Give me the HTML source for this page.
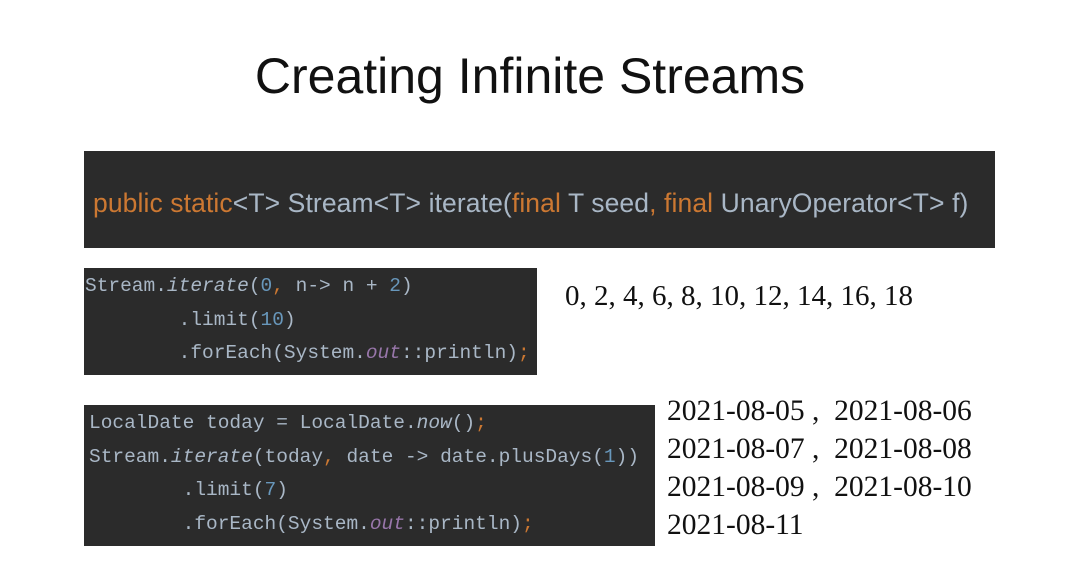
<!DOCTYPE html>
<html><head><meta charset="utf-8"><style>
body{margin:0;width:1070px;height:584px;background:#fff;position:relative;overflow:hidden;font-family:"Liberation Sans",sans-serif}
.a{position:absolute;white-space:pre}
.title{left:200px;top:47px;font-size:50px;color:#111;width:660px;text-align:center}
.box{position:absolute;background:#2b2b2b}
.code{font-family:"Liberation Mono",monospace;font-size:19.5px;color:#a9b7c6;line-height:33.5px}
.o{color:#cc7832}.n{color:#6897bb}.p{color:#9876aa;font-style:italic}.i{font-style:italic}
.serif{font-family:"Liberation Serif",serif;font-size:29.5px;color:#111}
</style></head><body>
<div class="a title">Creating Infinite Streams</div>
<div class="box" style="left:84px;top:151px;width:911px;height:97px"></div>
<div class="a" style="left:93px;top:188px;font-size:26.5px;letter-spacing:0.1px;color:#a9b7c6"><span class="o">public static</span>&lt;T&gt; Stream&lt;T&gt; iterate(<span class="o">final</span> T seed<span class="o">, final</span> UnaryOperator&lt;T&gt; f)</div>

<div class="box" style="left:84px;top:268px;width:453px;height:107px"></div>
<div class="a code" style="left:85px;top:270px">Stream.<span class="i">iterate</span>(<span class="n">0</span><span class="o">,</span> n-&gt; n + <span class="n">2</span>)
        .limit(<span class="n">10</span>)
        .forEach(System.<span class="p">out</span>::println)<span class="o">;</span></div>

<div class="a serif" style="left:565px;top:280px;font-size:29px">0, 2, 4, 6, 8, 10, 12, 14, 16, 18</div>

<div class="box" style="left:84px;top:405px;width:571px;height:141px"></div>
<div class="a code" style="left:89px;top:407px">LocalDate today = LocalDate.<span class="i">now</span>()<span class="o">;</span>
Stream.<span class="i">iterate</span>(today<span class="o">,</span> date -&gt; date.plusDays(<span class="n">1</span>))
        .limit(<span class="n">7</span>)
        .forEach(System.<span class="p">out</span>::println)<span class="o">;</span></div>

<div class="a serif" style="left:667px;top:392px;line-height:38px">2021-08-05 ,  2021-08-06
2021-08-07 ,  2021-08-08
2021-08-09 ,  2021-08-10
2021-08-11</div>
</body></html>
